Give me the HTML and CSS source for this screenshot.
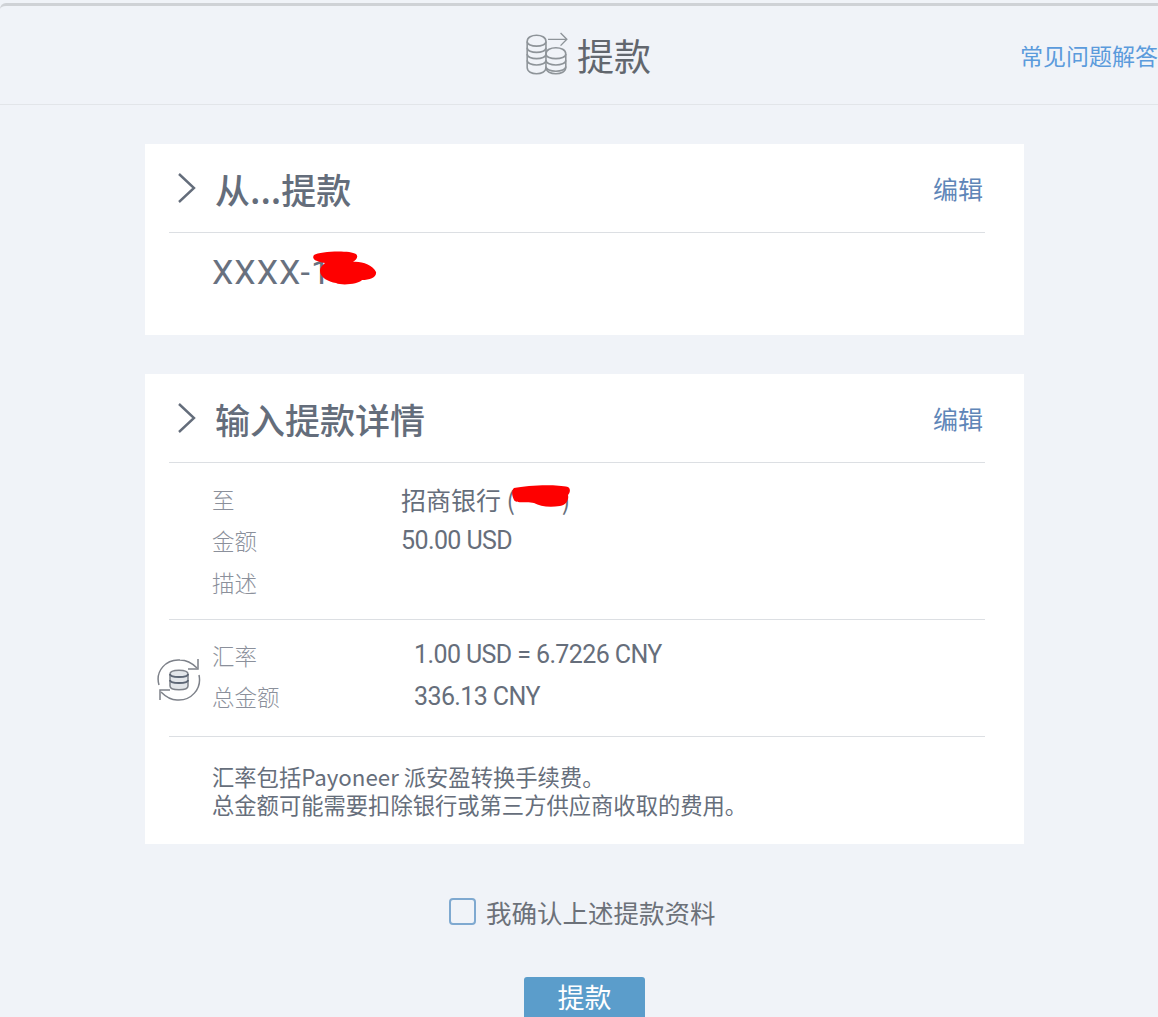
FILE: index.html
```html
<!DOCTYPE html>
<html lang="zh-CN">
<head>
    <meta charset="UTF-8">
    <title>提款</title>
    <link rel="stylesheet" href="styles.css">
</head>
<body>
    <div class="header">
        <div class="header-title">
            <svg class="coins-icon" viewBox="0 0 42 46" fill="none" stroke="#8e9499" stroke-width="1.5">
                <path d="M2 10c0-8 18-8 18 0v25c0 8-18 8-18 0z"/>
                <path d="M2 10c0 6 18 6 18 0M2 16c0 6 18 6 18 0M2 22c0 6 18 6 18 0M2 28c0 6 18 6 18 0"/>
                <path d="M20 22c0-8 19-8 19 0v13c0 8-19 8-19 0"/>
                <path d="M20 22c0 6 19 6 19 0M20 28c0 6 19 6 19 0M20 34c0 6 19 6 19 0"/>
                <path d="M22 8h17M34 2l6 6-6 6" stroke-width="1.3"/>
            </svg>
            <span>提款</span>
        </div>
        <a class="faq-link" href="#">常见问题解答</a>
    </div>

    <div class="card card-from">
        <div class="card-head">
            <svg class="chevron" viewBox="0 0 20 32" fill="none" stroke="#646d7b" stroke-width="2.4"><path d="M2 2l15 14L2 30"/></svg>
            <h2>从...提款</h2>
            <a class="edit-link" href="#">编辑</a>
        </div>
        <div class="account">
            <span class="redacted">XXXX-1
                <svg class="scribble scribble-account" viewBox="0 0 66 36"><path fill="#fe0000" d="M3 4c6-4 36-5 42-1 3 3 0 6-3 8 8-1 20 3 23 10 1 5-6 8-14 8-3 4-20 6-26 3-8-1-16-6-16-12 0-4 3-6 5-8C2 10 1 7 3 4z"/></svg>
            </span>
        </div>
    </div>

    <div class="card card-details">
        <div class="card-head">
            <svg class="chevron" viewBox="0 0 20 32" fill="none" stroke="#646d7b" stroke-width="2.4"><path d="M2 2l15 14L2 30"/></svg>
            <h2>输入提款详情</h2>
            <a class="edit-link" href="#">编辑</a>
        </div>
        <div class="rows rows-main">
            <div class="row">
                <span class="label">至</span>
                <span class="value">招商银行 <span class="redacted">(****)
                    <svg class="scribble scribble-bank" viewBox="0 0 62 24"><path fill="#fe0000" d="M4 3c14-3 42-4 54-1 3 2 2 6 0 8 1 4-1 10-8 11-12 2-20 0-26-3-6-2-18 1-20-3C2 11 1 6 4 3z"/></svg>
                </span></span>
            </div>
            <div class="row">
                <span class="label">金额</span>
                <span class="value num">50.00 USD</span>
            </div>
            <div class="row">
                <span class="label">描述</span>
            </div>
        </div>
        <div class="rows rows-rate">
            <svg class="rate-icon" viewBox="0 0 46 48" fill="none" stroke="#7d8189" stroke-width="1.5">
                <path d="M3 29C-1 15 10 3 24 4c6 0 12 3 17 8"/>
                <path d="M42 3v10H32"/>
                <path d="M43 19c3 14-8 26-22 25-6 0-11-3-16-8"/>
                <path d="M4 44V34h10"/>
                <path d="M14 18c0-5 18-5 18 0v12c0 5-18 5-18 0z" fill="#e3e6ea"/>
                <path d="M14 18c0 4 18 4 18 0M14 24c0 4 18 4 18 0" stroke="#5d6675" stroke-width="2"/>
            </svg>
            <div class="row">
                <span class="label">汇率</span>
                <span class="value num shifted">1.00 USD = 6.7226 CNY</span>
            </div>
            <div class="row">
                <span class="label">总金额</span>
                <span class="value num shifted">336.13 CNY</span>
            </div>
        </div>
        <div class="note">
            汇率包括Payoneer 派安盈转换手续费。<br>
            总金额可能需要扣除银行或第三方供应商收取的费用。
        </div>
    </div>

    <label class="confirm">
        <span class="checkbox"></span>
        我确认上述提款资料
    </label>

    <div class="actions">
        <button class="button">提款</button>
    </div>
</body>
</html>
```

FILE: styles.css
```css
html, body {
    height: 1017px;
    overflow: hidden;
}
body {
    margin: 0;
    font-family: "Noto Sans CJK SC", "Liberation Sans", sans-serif;
    background-color: #f0f3f8;
    color: #666e7b;
}
a {
    text-decoration: none;
    color: #5f8fc4;
}
.header {
    box-sizing: border-box;
    height: 105px;
    margin-top: 3px;
    border-top: 3px solid #cfd2d6;
    border-bottom: 1px solid #e2e5e9;
    border-radius: 6px 0 0 0;
    display: flex;
    align-items: center;
    position: relative;
    height: 102px;
}
.header-title {
    display: flex;
    align-items: center;
    gap: 8px;
    margin-left: 525px;
    font-size: 37px;
    color: #62676e;
}
.coins-icon {
    width: 44px;
    height: 48px;
}
.faq-link {
    margin-left: auto;
    font-size: 23px;
    white-space: nowrap;
    color: #5b9bdc;
}
.card {
    width: 879px;
    margin-left: 145px;
    background-color: #fff;
    box-sizing: border-box;
    padding: 0 39px 0 24px;
}
.card-from {
    height: 191px;
    margin-top: 39px;
}
.card-details {
    height: 470px;
    margin-top: 39px;
}
.card-head {
    height: 88px;
    border-bottom: 1px solid #dcdfe3;
    display: flex;
    align-items: center;
    gap: 18px;
}
.card-head h2 {
    margin: 0;
    font-size: 35px;
    font-weight: 500;
    color: #646d7b;
}
.chevron {
    width: 20px;
    height: 32px;
    margin-left: 8px;
}
.edit-link {
    margin-left: auto;
    margin-right: 2px;
    font-size: 25px;
    color: #5f86b8;
}
.account {
    padding: 16px 0 0 43px;
    font-size: 34px;
    line-height: 46px;
    letter-spacing: 1px;
    font-family: "Roboto", "Noto Sans CJK SC", sans-serif;
    color: #68717f;
}
.redacted {
    position: relative;
    display: inline-block;
}
.scribble {
    position: absolute;
}
.scribble-account {
    left: 93px;
    top: 2px;
    width: 78px;
    height: 36px;
}
.scribble-bank {
    left: 3px;
    top: 4px;
    width: 62px;
    height: 24px;
}
.rows {
    position: relative;
    padding-left: 43px;
    border-bottom: 1px solid #dcdfe3;
}
.rows-main {
    height: 157px;
    padding-top: 15px;
    box-sizing: border-box;
}
.rows-rate {
    height: 117px;
    padding-top: 14px;
    box-sizing: border-box;
}
.row {
    display: flex;
    align-items: center;
    height: 41.5px;
}
.label {
    width: 189px;
    font-size: 22.5px;
    color: #8b909b;
    font-weight: 300;
}
.value {
    font-size: 25px;
    color: #666e7b;
}
.num {
    font-family: "Roboto", "Noto Sans CJK SC", sans-serif;
    letter-spacing: -0.6px;
}
.shifted {
    margin-left: 13px;
}
.rate-icon {
    position: absolute;
    left: -13px;
    top: 36px;
    width: 46px;
    height: 48px;
}
.note {
    padding: 25px 0 0 43px;
    font-size: 22.3px;
    line-height: 28px;
    color: #666e7b;
}
.confirm {
    display: flex;
    align-items: center;
    gap: 10px;
    margin: 49px 0 0 449px;
    height: 36px;
    font-size: 25.5px;
    color: #6c7179;
}
.checkbox {
    box-sizing: border-box;
    width: 27px;
    height: 27px;
    border: 2px solid #7fa9d0;
    border-radius: 4px;
}
.actions {
    display: flex;
    margin: 48px 0 0 524px;
}
.button {
    width: 121px;
    height: 70px;
    padding: 0 0 30px;
    font-family: inherit;
    font-size: 27px;
    line-height: 40px;
    background-color: #5b9dcb;
    color: white;
    border: none;
    border-radius: 3px;
}
```
